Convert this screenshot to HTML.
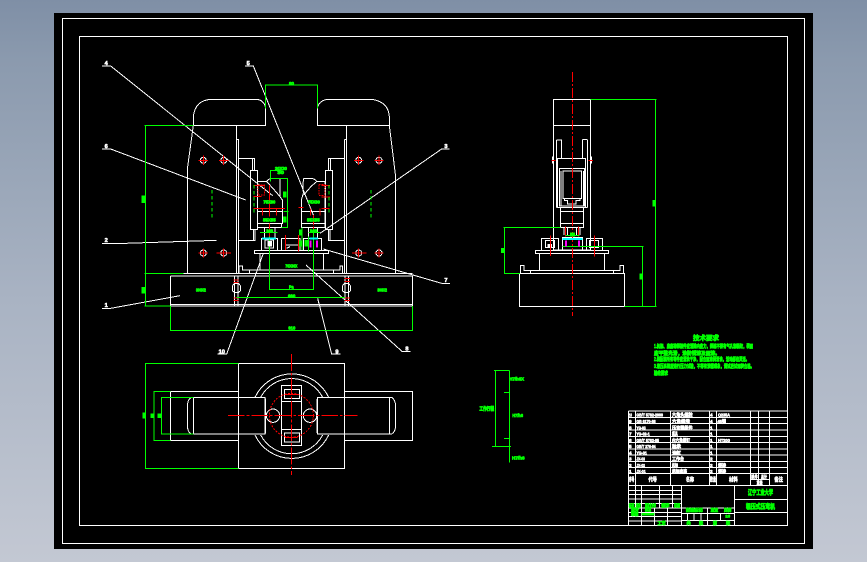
<!DOCTYPE html>
<html><head><meta charset="utf-8"><style>
html,body{margin:0;padding:0;width:867px;height:562px;overflow:hidden;background:linear-gradient(180deg,#7f8fa6 0,#8b9aae 60px,#a9b3c3 300px,#c3c8d3 100%)}
svg{position:absolute;left:0;top:0}
text{font-family:"Liberation Sans","Noto Sans CJK SC",sans-serif;font-weight:bold}
.w{fill:none;stroke:#fff;stroke-width:3}
.g{fill:none;stroke:#00ff00;stroke-width:3}
.r{fill:none;stroke:#ff0000;stroke-width:3}
.gt{fill:#00ff00;stroke:#00ff00;stroke-width:2.4}
.wt{fill:#fff;stroke:#fff;stroke-width:1.8}
</style></head><body>
<svg width="867" height="562" viewBox="0 0 867 562" xmlns="http://www.w3.org/2000/svg">
<rect x="54" y="13" width="759" height="536" fill="#000"/>
<rect x="62.5" y="18.5" width="742" height="525" fill="none" stroke="#fff"/>
<rect x="79.5" y="36.5" width="708" height="489" fill="none" stroke="#fff"/>

<!-- main front view -->
<g transform="translate(90 50) scale(.33333)" shape-rendering="crispEdges">
<g class="w">
<path d="M310 226V200Q315 150 365 148H500Q520 150 526 170V226ZM683 226V170Q690 150 715 148H845Q895 155 898 200V226Z"/>
<path d="M310 226L293 350V670M439 226V268M898 226L917 380V670M770 226V670"/>
<path d="M439 268H446V670M439 268V670M763 268H770M763 268V670"/>
<path d="M446 325H493V360M488 325V360M446 571H495V538M490 571V538M763 325H716V360M721 325V360M763 571H715V538M720 571V538"/>
<rect x="481" y="361" width="21" height="177"/><rect x="706" y="361" width="21" height="177"/>
<path d="M280 670H968M241 678H968M241 678V768M968 678V768M241 763H968M241 768H968M434 678V768M444 678V768M765 678V768M775 678V768"/>
<path d="M447 670V648H458V660H750V648H758V670M478 660V670M730 660V670M510 611V660M700 611V660"/>
<rect x="493" y="601" width="223" height="10"/>
<path d="M502 395H530Q535 385 550 385H570V440L577 450V520H502ZM502 484H577M502 520V533H575V520M530 395Q545 410 570 440"/>
<path d="M705 395H680Q675 385 660 385H642Q638 390 640 430L634 450V520H705ZM634 484H705M634 520V533H705V520M680 395Q660 410 642 435"/>
<path d="M523 533V565M555 533V565M655 533V565M683 533V565"/>
<rect x="514" y="565" width="48" height="36"/><rect x="525" y="570" width="26" height="24"/>
<rect x="575" y="565" width="55" height="36"/><path d="M585 585H625M590 595L600 590"/>
<rect x="640" y="565" width="55" height="36"/>
<path d="M427 708L434 700H445L452 708V722L445 728H434L427 722ZM757 708L764 700H775L782 708V722L775 728H764L757 722Z"/>
<circle cx="340" cy="331" r="9"/><circle cx="401" cy="331" r="9"/><circle cx="806" cy="331" r="9"/><circle cx="867" cy="331" r="9"/>
<circle cx="340" cy="609" r="9"/><circle cx="401" cy="609" r="9"/><circle cx="806" cy="609" r="9"/><circle cx="867" cy="609" r="9"/>
<!-- leaders -->
<path d="M36 48H62L548 437M465 48H490L670 495M36 297H62L467 450M36 580H105L380 571M36 775H62L270 737M1078 297H1055L690 550M1080 700H1055L700 597M382 912H410L520 610M752 912H725L683 745M962 905H937L648 645"/>
</g>
<g class="r">
<path d="M326 331H354M340 317V345M387 331H415M401 317V345M792 331H820M806 317V345M853 331H881M867 317V345M326 609H354M340 595V623M379 609H423M401 595V623M786 609H830M806 595V623M853 609H881M867 595V623"/>
<path d="M538 405V500M490 406H525M490 440H515M490 476H585M517 475V497M560 475V497M670 525V495M625 472H640M695 406H720M695 441H720M694 475H718M690 475V497M662 475V497M538 520V560M670 530V560M430 690H446M430 698H446M430 744H446M430 752H446M764 686H780M764 694H780M764 744H780M764 752H780M605 912V930M587 555V600M626 555V605"/>
<rect x="504" y="405" width="20" height="30" stroke-dasharray="5 3"/><rect x="687" y="403" width="18" height="33" stroke-dasharray="5 3"/>
</g>
<g class="g">
<path d="M163 226H310M166 226V768M163 768H241M163 670H280M241 768V841H968V768M526 176V105H683V176M439 742H765M538 560V718H670V540M541 395V362H575M540 385H592V533H575M580 484H596M510 547H563M655 548H690M636 533V600M656 560V605" />
<path d="M366 420V505M843 420V505M492 405V490M717 405V490" stroke-dasharray="10 8" stroke-width="4"/>
</g>
<rect x="516" y="563" width="42" height="6" fill="#00ffff"/><rect x="658" y="572" width="6" height="20" fill="#ff00ff"/><rect x="678" y="572" width="6" height="20" fill="#ff00ff"/><rect x="658" y="563" width="26" height="5" fill="#00ffff"/>
<rect x="532" y="573" width="14" height="16" fill="#fff"/><rect x="643" y="570" width="13" height="20" fill="#00ff00"/>
<g class="gt" font-size="15">
<text x="318" y="725" textLength="30" lengthAdjust="spacingAndGlyphs">300X2</text>
<text x="862" y="725" textLength="29" lengthAdjust="spacingAndGlyphs">300X2</text>
<text x="586" y="653" textLength="36" lengthAdjust="spacingAndGlyphs">70X80X</text>
<text x="594" y="742" textLength="22" lengthAdjust="spacingAndGlyphs">660</text>
<text x="595" y="838" textLength="21" lengthAdjust="spacingAndGlyphs">910</text>
<text x="597" y="105" textLength="15" lengthAdjust="spacingAndGlyphs">80</text>
<text x="597" y="716" textLength="14" lengthAdjust="spacingAndGlyphs">Pa</text>
<text x="520" y="460" textLength="36" lengthAdjust="spacingAndGlyphs">75X60</text>
<text x="654" y="460" textLength="36" lengthAdjust="spacingAndGlyphs">75X60</text>
<text x="519" y="514" textLength="38" lengthAdjust="spacingAndGlyphs">55X55</text>
<text x="651" y="514" textLength="38" lengthAdjust="spacingAndGlyphs">55X55</text>
<text x="555" y="360" textLength="36" lengthAdjust="spacingAndGlyphs">30X30</text>
<text x="562" y="372" textLength="20" lengthAdjust="spacingAndGlyphs">30</text>
<text x="529" y="547" textLength="20" lengthAdjust="spacingAndGlyphs">M8</text>
<text x="660" y="547" textLength="22" lengthAdjust="spacingAndGlyphs">M8</text>
<rect x="156" y="438" width="10" height="20"/><rect x="156" y="712" width="10" height="17"/>
<rect x="580" y="426" width="9" height="16"/><rect x="580" y="500" width="9" height="16"/><rect x="628" y="540" width="9" height="15"/><rect x="628" y="573" width="9" height="15"/>
</g>
<g class="wt" font-size="17">
<text x="44" y="45">4</text><text x="470" y="45">5</text><text x="44" y="294">6</text><text x="44" y="576">2</text><text x="44" y="771">1</text><text x="1063" y="294">3</text><text x="1063" y="696">7</text><text x="386" y="910">10</text><text x="736" y="910">9</text><text x="946" y="902">8</text>
</g>
</g>

<!-- side view -->
<g transform="translate(490 60) scale(.33333)" shape-rendering="crispEdges">
<g class="w">
<rect x="190" y="119" width="111" height="451"/>
<path d="M190 196H301M199 240V295M215 238V295M277 238V295M293 240V295M199 240H215M277 238H293M187 289V311M304 289V311"/>
<path d="M202 295H287V442H202ZM199 295V442M293 295V442M199 442H293"/>
<rect x="208" y="325" width="76" height="113"/><rect x="219" y="333" width="55" height="83"/>
<path d="M213 333V438M280 333V438M223 416H270V422H258V432H233V422H223Z"/>
<rect x="211" y="443" width="70" height="60"/><path d="M211 455H281M211 490H281"/>
<path d="M222 503V525M232 503V525M260 503V525M270 503V525"/>
<rect x="154" y="535" width="52" height="36"/><rect x="166" y="541" width="27" height="22"/>
<rect x="289" y="535" width="49" height="36"/><rect x="298" y="541" width="28" height="22"/>
<rect x="218" y="532" width="60" height="38"/>
<rect x="136" y="571" width="220" height="10"/>
<path d="M148 581V632M344 581V632M91 640V616H102V631H390V616H401V640M121 631V640M370 631V640"/>
<rect x="88" y="640" width="316" height="99"/>
<rect x="172" y="552" width="14" height="10" fill="#fff" stroke="none"/>
</g>
<path class="r" stroke-width="3" d="M247 36V768" stroke-dasharray="30 6 6 6"/>
<path class="r" d="M184 301H196M296 301H309M226 500V530M266 500V530M181 526V588M313 526V590"/>
<g class="g">
<path d="M301 119H500M496 119V739M404 739H500M212 502H40M43 502V640H90M218 559H461M457 559V739M226 527H268"/>
</g>
<rect x="217" y="534" width="60" height="6" fill="#00ffff"/><rect x="225" y="541" width="6" height="19" fill="#ff00ff"/><rect x="264" y="541" width="6" height="19" fill="#ff00ff"/>
<rect x="240" y="517" width="15" height="12" fill="#00ff00"/>
<rect x="487" y="420" width="10" height="20" fill="#00ff00"/><rect x="33" y="564" width="10" height="15" fill="#00ff00"/><rect x="448" y="640" width="10" height="18" fill="#00ff00"/>
</g>

<!-- plan view -->
<g transform="translate(130 350) scale(.33333)" shape-rendering="crispEdges">
<g class="w">
<path d="M325 124H122V271H325M644 124H847V271H644"/>
<rect x="325" y="41" width="319" height="314"/>
<path d="M191 142H405V252H191ZM191 142H183Q172 150 172 170V225Q172 245 183 252H191M778 142H563V252H778ZM778 142H785Q797 150 797 170V225Q797 245 785 252H778"/>
<path d="M405 142Q408 150 407 160V235Q408 245 405 252M563 142Q560 150 561 160V235Q560 245 563 252"/>
<path d="M375 142A122 122 0 0 1 596 142M375 255A122 122 0 0 0 596 255M392 142A105 105 0 0 1 578 142M392 255A105 105 0 0 0 578 255"/>
<circle cx="429" cy="197" r="20"/><circle cx="540" cy="197" r="20"/>
<rect x="455" y="107" width="59" height="179"/>
<path d="M455 155H514M455 238H514"/>
<rect x="463" y="119" width="46" height="27"/><rect x="463" y="249" width="46" height="27"/>
</g>
<g class="r">
<path d="M294 196H682" stroke-dasharray="50 6 8 6"/>
<path d="M484 13V375" stroke-dasharray="50 6 8 6"/>
<circle cx="484" cy="196" r="66" stroke-dasharray="6 4"/>
<path d="M465 133H503M465 263H503"/>
</g>
<g class="g">
<path d="M325 41H46V355H325M122 124H72V271H122M191 142H94V252H191"/>
</g>
<rect x="37" y="188" width="10" height="18" fill="#00ff00"/><rect x="62" y="190" width="10" height="14" fill="#00ff00"/><rect x="83" y="190" width="11" height="14" fill="#00ff00"/>
</g>

<!-- small dimension -->
<g transform="translate(470 360) scale(.33333)" shape-rendering="crispEdges">
<g class="g">
<path d="M72 31H119M76 31V260M119 31V308M102 97H119M102 235H119M66 259H123"/>
</g>
<g class="gt" font-size="15">
<text x="118" y="62" textLength="44" lengthAdjust="spacingAndGlyphs">H7/h6X</text>
<text x="127" y="171" textLength="32" lengthAdjust="spacingAndGlyphs">H7/h6</text>
<text x="126" y="299" textLength="38" lengthAdjust="spacingAndGlyphs">H7/h6</text>
<text x="28" y="151" textLength="44" lengthAdjust="spacingAndGlyphs">工作行程</text>
</g>
</g>

<!-- notes -->
<g font-size="5" fill="#00ff00" stroke="#00ff00" stroke-width=".7">
<text x="693" y="340" font-size="6.5">技术要求</text>
<text x="654" y="348" textLength="99" lengthAdjust="spacingAndGlyphs">1.机架、底座等焊接件应消除内应力，焊缝不得有气孔和裂纹，表面</text>
<text x="654" y="355" textLength="66" lengthAdjust="spacingAndGlyphs">应平整光滑，涂防锈漆及面漆。</text>
<text x="654" y="361" textLength="95" lengthAdjust="spacingAndGlyphs">2.装配前所有零件应清洗干净，配合面涂润滑油，活动部位灵活。</text>
<text x="654" y="368" textLength="100" lengthAdjust="spacingAndGlyphs">3.液压系统应进行压力试验，不得有渗漏现象，调试后试运转合格。</text>
<text x="654" y="375" textLength="14" lengthAdjust="spacingAndGlyphs">验收要求</text>
</g>

<!-- title block -->
<g transform="translate(620 400) scale(.33333)" shape-rendering="crispEdges">
<g class="w">
<path d="M25 33H502M25 52H502M25 71H502M25 90H502M25 109H502M25 128H502M25 147H502M25 165H502M25 184H502M25 203H502M25 221H502M25 256H502"/>
<path d="M25 33V375M46 33V256M151 33V256M268 33V256M289 33V256M391 33V256M415 33V256M448 33V256M391 238H448M343 256V375M185 256V375"/>
<path d="M25 271H185M25 284H185M25 297H185M25 310H185M25 324H185M25 337H185M25 350H185M25 363H185M46 256V324M65 256V375M118 256V324M157 256V324M103 324V375M143 324V375"/>
<path d="M185 324H343M185 340H343M185 361H343M203 340V361M222 340V361M243 340V361M262 324V375M301 340V361M343 298H502M343 337H502"/>
</g>
<g class="wt" font-size="14">
<text x="27" y="50" textLength="9" lengthAdjust="spacingAndGlyphs">10</text><text x="49" y="50" textLength="80" lengthAdjust="spacingAndGlyphs">GB/T 5782-2000</text><text x="156" y="50" textLength="62" lengthAdjust="spacingAndGlyphs">六角头螺栓</text><text x="270" y="50" textLength="8">4</text><text x="294" y="50" textLength="36" lengthAdjust="spacingAndGlyphs">Q235A</text>
<text x="27" y="69">9</text><text x="49" y="69" textLength="58" lengthAdjust="spacingAndGlyphs">GB 6170-86</text><text x="156" y="69" textLength="54" lengthAdjust="spacingAndGlyphs">六角螺母</text><text x="270" y="69">4</text><text x="292" y="69" textLength="26" lengthAdjust="spacingAndGlyphs">45钢</text>
<text x="27" y="88">8</text><text x="49" y="88" textLength="28" lengthAdjust="spacingAndGlyphs">YG-03</text><text x="156" y="88" textLength="62" lengthAdjust="spacingAndGlyphs">压弯辊组件</text><text x="270" y="88">1</text>
<text x="27" y="107">7</text><text x="49" y="107" textLength="40" lengthAdjust="spacingAndGlyphs">YG-02-1</text><text x="156" y="107" textLength="17" lengthAdjust="spacingAndGlyphs">模具</text><text x="270" y="107">1</text>
<text x="27" y="126">6</text><text x="49" y="126" textLength="68" lengthAdjust="spacingAndGlyphs">GB/T 5783-85</text><text x="156" y="126" textLength="54" lengthAdjust="spacingAndGlyphs">内六角螺钉</text><text x="270" y="126">1</text><text x="294" y="126" textLength="36" lengthAdjust="spacingAndGlyphs">HT200</text>
<text x="27" y="144">5</text><text x="49" y="144" textLength="58" lengthAdjust="spacingAndGlyphs">GB/T 276-94</text><text x="156" y="144" textLength="27" lengthAdjust="spacingAndGlyphs">轴承</text><text x="270" y="144">1</text>
<text x="27" y="163">4</text><text x="49" y="163" textLength="32" lengthAdjust="spacingAndGlyphs">YG-01</text><text x="156" y="163" textLength="27" lengthAdjust="spacingAndGlyphs">油缸</text><text x="270" y="163">1</text>
<text x="27" y="182">3</text><text x="49" y="182" textLength="26" lengthAdjust="spacingAndGlyphs">JX-03</text><text x="156" y="182" textLength="36" lengthAdjust="spacingAndGlyphs">工作台</text><text x="270" y="182">2</text>
<text x="27" y="201">2</text><text x="49" y="201" textLength="26" lengthAdjust="spacingAndGlyphs">JX-02</text><text x="156" y="201" textLength="18" lengthAdjust="spacingAndGlyphs">机架</text><text x="270" y="201">2</text><text x="294" y="201" textLength="24" lengthAdjust="spacingAndGlyphs">焊接</text>
<text x="27" y="219">1</text><text x="49" y="219" textLength="28" lengthAdjust="spacingAndGlyphs">JX-01</text><text x="156" y="219" textLength="45" lengthAdjust="spacingAndGlyphs">机架底座</text><text x="270" y="219">2</text><text x="294" y="219" textLength="24" lengthAdjust="spacingAndGlyphs">焊接</text>
<g font-size="17"><text x="27" y="245" textLength="16" lengthAdjust="spacingAndGlyphs">序号</text><text x="85" y="245" textLength="26" lengthAdjust="spacingAndGlyphs">代号</text><text x="198" y="245" textLength="24" lengthAdjust="spacingAndGlyphs">名称</text><text x="270" y="245" textLength="18" lengthAdjust="spacingAndGlyphs">数量</text><text x="327" y="245" textLength="26" lengthAdjust="spacingAndGlyphs">材料</text><text x="463" y="245" textLength="26" lengthAdjust="spacingAndGlyphs">备注</text></g>
<text x="393" y="235" textLength="20" lengthAdjust="spacingAndGlyphs">单件</text><text x="423" y="235" textLength="18" lengthAdjust="spacingAndGlyphs">总计</text><text x="410" y="254" textLength="18" lengthAdjust="spacingAndGlyphs">重量</text>
</g>
<g class="gt" font-size="19">
<text x="384" y="284" textLength="75" lengthAdjust="spacingAndGlyphs">辽宁工业大学</text>
<text x="378" y="325" textLength="87" lengthAdjust="spacingAndGlyphs">辊压式压弯机</text>
</g>
<g class="gt" font-size="12">
<text x="27" y="321" textLength="16" lengthAdjust="spacingAndGlyphs">标记</text><text x="48" y="321" textLength="14" lengthAdjust="spacingAndGlyphs">处数</text><text x="75" y="321" textLength="33" lengthAdjust="spacingAndGlyphs">更改文件号</text><text x="124" y="321" textLength="24" lengthAdjust="spacingAndGlyphs">签字</text><text x="162" y="321" textLength="18" lengthAdjust="spacingAndGlyphs">日期</text>
<text x="33" y="333" textLength="24" lengthAdjust="spacingAndGlyphs">设计</text><text x="75" y="333" textLength="18" lengthAdjust="spacingAndGlyphs">标准</text>
<text x="33" y="347" textLength="22" lengthAdjust="spacingAndGlyphs">审核</text>
<rect x="66" y="340" width="37" height="6"/>
<text x="198" y="335" textLength="50" lengthAdjust="spacingAndGlyphs">阶段标记</text><text x="272" y="335" textLength="22" lengthAdjust="spacingAndGlyphs">重量</text><text x="312" y="335" textLength="22" lengthAdjust="spacingAndGlyphs">比例</text>
<text x="316" y="353" textLength="14" lengthAdjust="spacingAndGlyphs">1:5</text>
<text x="113" y="374" textLength="24" lengthAdjust="spacingAndGlyphs">工艺</text><text x="200" y="374" textLength="8">共</text><text x="237" y="374" textLength="9">张</text><text x="279" y="374" textLength="9">第</text><text x="318" y="374" textLength="6">张</text>
</g>
</g>
</svg>
</body></html>
